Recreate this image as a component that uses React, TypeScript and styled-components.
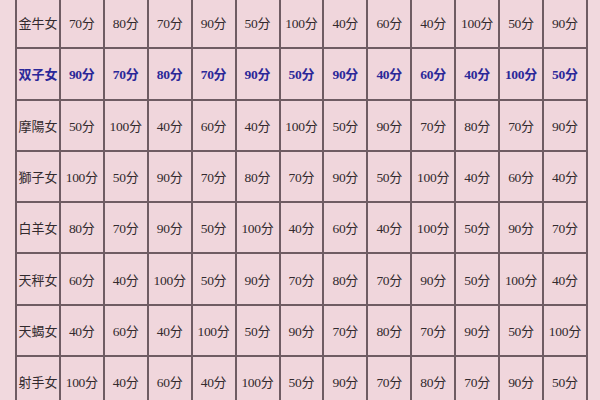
import styled, { createGlobalStyle } from 'styled-components'

const GlobalStyle = createGlobalStyle`
  html, body {
    margin: 0;
    padding: 0;
    background: #f1d9de;
    overflow: hidden;
  }
`

const rows: { name: string; scores: number[]; highlight?: boolean }[] = [
    { name: '金牛女', scores: [70, 80, 70, 90, 50, 100, 40, 60, 40, 100, 50, 90] },
    { name: '双子女', scores: [90, 70, 80, 70, 90, 50, 90, 40, 60, 40, 100, 50], highlight: true },
    { name: '摩陽女', scores: [50, 100, 40, 60, 40, 100, 50, 90, 70, 80, 70, 90] },
    { name: '獅子女', scores: [100, 50, 90, 70, 80, 70, 90, 50, 100, 40, 60, 40] },
    { name: '白羊女', scores: [80, 70, 90, 50, 100, 40, 60, 40, 100, 50, 90, 70] },
    { name: '天秤女', scores: [60, 40, 100, 50, 90, 70, 80, 70, 90, 50, 100, 40] },
    { name: '天蝎女', scores: [40, 60, 40, 100, 50, 90, 70, 80, 70, 90, 50, 100] },
    { name: '射手女', scores: [100, 40, 60, 40, 100, 50, 90, 70, 80, 70, 90, 50] },
]

const App = () => {
    return (
        <Page>
            <GlobalStyle />
            <ScoreTable>
                <tbody>
                    {rows.map((row) => (
                        <Row key={row.name}>
                            <Cell $highlight={row.highlight}>{row.name}</Cell>
                            {row.scores.map((s, i) => (
                                <Cell key={i} $highlight={row.highlight}>
                                    <Num>{s}</Num>分
                                </Cell>
                            ))}
                        </Row>
                    ))}
                </tbody>
            </ScoreTable>
        </Page>
    )
}

const Page = styled.div`
  width: 600px;
  height: 400px;
  padding-left: 15px;
  box-sizing: border-box;
  background: #f1d9de;
  overflow: hidden;
`

const ScoreTable = styled.table`
  margin-top: -4px;
  width: 573px;
  table-layout: fixed;
  border-collapse: collapse;
  background: #f0d6dc;
`

const Row = styled.tr`
  height: 51.3px;
`

const Cell = styled.td<{ $highlight?: boolean }>`
  border: 2px solid #6f5c63;
  padding: 0;
  text-align: center;
  vertical-align: middle;
  white-space: nowrap;
  font-family: "Liberation Serif", "Noto Sans CJK SC", serif;
  font-size: 13px;
  color: ${(p) => (p.$highlight ? '#2b2899' : '#322a2e')};
  font-weight: ${(p) => (p.$highlight ? 700 : 400)};
`

const Num = styled.span`
  font-size: 13.5px;
  letter-spacing: -0.3px;
`

export default App
